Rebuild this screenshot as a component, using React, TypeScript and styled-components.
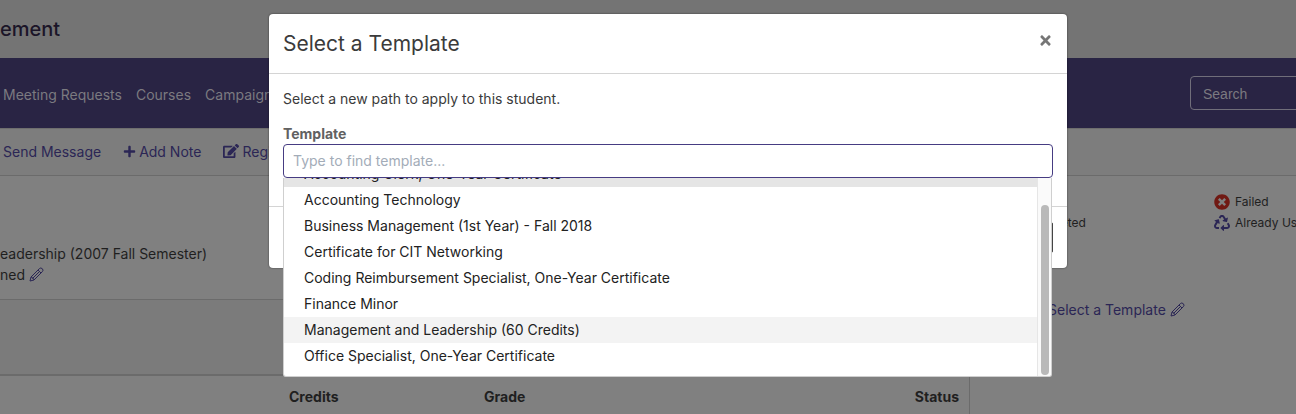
import React from "react";
import styled, { createGlobalStyle, css } from "styled-components";
import { FaPlus, FaEdit, FaTimes, FaTimesCircle, FaRecycle } from "react-icons/fa";

const ink = "#1f1f1f";
const indigo = "#2b2655";

const Global = createGlobalStyle`
  * { box-sizing: border-box; }
  body {
    margin: 0;
    overflow: hidden;
    font: 14px/21px Inter, "Liberation Sans", sans-serif;
    color: ${ink};
    background: #808080;
  }
  h1, h2, p, ul { margin: 0; padding: 0; font-weight: 400; }
  button, input { font: inherit; }
  a { color: inherit; text-decoration: none; }
`;

const Page = styled.div`
  position: relative;
  display: flex;
  flex-direction: column;
  min-height: 100vh;
`;

const Header = styled.header`
  padding: 14px 0;
  background: #747474;
`;

const HeaderTitle = styled.h1`
  && { font-size: 20px; line-height: 30px; font-weight: 500; }
  color: #1b1528;
  white-space: nowrap;
`;

const Nav = styled.nav`
  display: flex;
  align-items: center;
  gap: 14px;
  height: 70px;
  padding-left: 3px;
  background: #292444;
  color: #7b7a80;
  white-space: nowrap;
  overflow: hidden;
`;

const NavLink = styled.a`
  padding-top: 2px;
`;

const NavSearch = styled.input`
  flex: none;
  width: 200px;
  height: 34px;
  margin-left: auto;
  margin-right: -94px;
  padding: 2px 12px 0;
  border: 1px solid #706e7a;
  border-radius: 4px;
  background: transparent;
  color: #7b7a80;
  && { font-family: "Liberation Sans", sans-serif; }
  &::placeholder { color: #7b7a80; opacity: 1; }
`;

const Toolbar = styled.div`
  display: flex;
  align-items: center;
  gap: 22px;
  height: 48px;
  padding-bottom: 2px;
  padding-left: 3px;
  border-top: 1px solid #6e6e6e;
  border-bottom: 1px solid #6b6b6b;
  background: #7d7d7d;
`;

const ToolButton = styled.button`
  display: flex;
  align-items: center;
  gap: 3px;
  padding: 0;
  border: 0;
  background: none;
  color: ${indigo};
  white-space: nowrap;
`;

const Content = styled.div`
  display: flex;
  flex: 1;
`;

const Main = styled.main`
  display: flex;
  flex-direction: column;
  flex: 1;
  border-right: 1px solid #6b6b6b;
`;

const Summary = styled.section`
  padding: 67px 0 14px;
  white-space: nowrap;
`;

const SummaryLine = styled.p`
  display: flex;
  align-items: center;
  gap: 4px;
`;

const Spacer = styled.div`
  height: 77px;
  border-top: 1px solid #6b6b6b;
  border-bottom: 2px solid #6b6b6b;
  background: #7b7b7b;
`;

const Courses = styled.table`
  width: 100%;
  border-collapse: collapse;
  table-layout: fixed;
  border-bottom: 1px solid #6b6b6b;
`;

const Th = styled.th<{ $width?: string; $right?: boolean }>`
  width: ${(p) => p.$width ?? "auto"};
  height: 38px;
  padding: 4px 10px 0 0;
  font-weight: 700;
  text-align: ${(p) => (p.$right ? "right" : "left")};
`;

const Aside = styled.aside`
  flex: none;
  width: 326px;
  overflow: hidden;
`;

const Legend = styled.ul`
  display: grid;
  grid-template-columns: 190px 160px;
  && { padding: 15px 0 0 54px; }
  font-size: 12px;
  list-style: none;
`;

const LegendItem = styled.li`
  display: flex;
  align-items: center;
  gap: 5px;
  height: 21px;
  white-space: nowrap;
`;

const TemplateLink = styled.a`
  && { color: ${indigo}; }
  display: flex;
  align-items: center;
  gap: 4px;
  padding: 66px 0 0 78px;
`;

const Dialog = styled.div`
  position: absolute;
  top: 14px;
  left: 269px;
  right: 229px;
  border-radius: 4px;
  background: #fff;
  box-shadow: 0 0 2px rgba(0, 0, 0, 0.6);
  color: #3b3b3b;
`;

const DialogHead = styled.div`
  display: flex;
  align-items: center;
  justify-content: space-between;
  height: 60px;
  padding: 0 14px;
  border-bottom: 1px solid #d4d4d4;
`;

const DialogTitle = styled.h2`
  && { font-size: 21px; line-height: 30px; }
`;

const CloseButton = styled.button`
  display: flex;
  padding: 0 0 7px;
  border: 0;
  background: none;
  color: #767676;
`;

const DialogBody = styled.div`
  padding: 14px 14px 28px;
`;

const Label = styled.label`
  display: block;
  margin-top: 14px;
  font-weight: 700;
  color: #616161;
`;

const Picker = styled.div`
  position: relative;
`;

const PickerInput = styled.input`
  display: block;
  width: 100%;
  height: 34px;
  padding: 0 9px 2px;
  border: 1px solid #463c82;
  border-radius: 4px;
  outline: none;
  &::placeholder { color: #a3acb8; opacity: 1; }
`;

const Menu = styled.div`
  position: absolute;
  top: 100%;
  left: 0;
  right: 1px;
  display: flex;
  height: 199px;
  border: 1px solid #cfcfcf;
  border-top: 0;
  border-radius: 0 0 3px 3px;
  background: #fff;
  overflow: hidden;
`;

const Options = styled.ul`
  display: flex;
  flex-direction: column;
  justify-content: flex-end;
  flex: 1;
  && { padding-bottom: 7px; }
  list-style: none;
  color: #222;
`;

const Option = styled.li<{ $tone?: "active" | "hover" }>`
  flex: none;
  height: 26px;
  padding: 0 20px;
  line-height: 26px;
  ${(p) => p.$tone === "active" && css`background: #e5e5e5;`}
  ${(p) => p.$tone === "hover" && css`background: #f3f3f3;`}
`;

const Track = styled.div`
  display: flex;
  width: 14px;
  padding: 27px 2px 1px 3px;
  border-left: 1px solid #e6e6e6;
  background: #fafafa;
`;

const Thumb = styled.div`
  flex: 1;
  border-radius: 4px;
  background: #b9b9b9;
`;

const DialogFoot = styled.div`
  display: flex;
  justify-content: flex-end;
  padding: 15px 14px;
  border-top: 1px solid #d4d4d4;
`;

const ApplyButton = styled.button`
  height: 31px;
  padding: 0 12px;
  border: 1px solid #444;
  border-radius: 2px;
  background: #444;
  color: #fff;
`;

const Pencil = () => (
  <svg width="15" height="15" viewBox="0 0 15 15" fill="none" stroke={indigo} strokeWidth="1" strokeLinejoin="round" aria-hidden="true">
    <path d="M1 14 L2 10 L10.3 1.7 Q11.8 .2 13.3 1.7 Q14.8 3.2 13.3 4.7 L5 13 Z" />
    <path d="M2 10 Q3.6 9.9 3.6 11.4 Q5.1 11.4 5 13 M9 3 L12 6 M3.6 11.4 L10.5 4.5" />
  </svg>
);

const options: { name: string; tone?: "active" | "hover" }[] = [
  { name: "Accounting Clerk, One-Year Certificate", tone: "active" },
  { name: "Accounting Technology" },
  { name: "Business Management (1st Year) - Fall 2018" },
  { name: "Certificate for CIT Networking" },
  { name: "Coding Reimbursement Specialist, One-Year Certificate" },
  { name: "Finance Minor" },
  { name: "Management and Leadership (60 Credits)", tone: "hover" },
  { name: "Office Specialist, One-Year Certificate" },
];

export default function App() {
  return (
    <Page>
      <Global />
      <Header>
        <HeaderTitle>ement</HeaderTitle>
      </Header>
      <Nav>
        <NavLink href="#meetings">Meeting Requests</NavLink>
        <NavLink href="#courses">Courses</NavLink>
        <NavLink href="#campaigns">Campaigns</NavLink>
        <NavSearch aria-label="Search" placeholder="Search" />
      </Nav>
      <Toolbar>
        <ToolButton>Send Message</ToolButton>
        <ToolButton><FaPlus size={13} />Add Note</ToolButton>
        <ToolButton><FaEdit size={16} />Register</ToolButton>
      </Toolbar>
      <Content>
        <Main>
          <Summary>
            <SummaryLine>eadership (2007 Fall Semester)</SummaryLine>
            <SummaryLine>ned <Pencil /></SummaryLine>
          </Summary>
          <Spacer />
          <Courses>
            <thead>
              <tr>
                <Th $width="289px" aria-label="Course" />
                <Th $width="195px">Credits</Th>
                <Th>Grade</Th>
                <Th $right>Status</Th>
              </tr>
            </thead>
          </Courses>
        </Main>
        <Aside>
          <Legend>
            <LegendItem />
            <LegendItem><FaTimesCircle size={16} color="#701913" />Failed</LegendItem>
            <LegendItem>Completed</LegendItem>
            <LegendItem><FaRecycle size={16} color={indigo} />Already Used</LegendItem>
          </Legend>
          <TemplateLink href="#template">Select a Template <Pencil /></TemplateLink>
        </Aside>
      </Content>

      <Dialog role="dialog" aria-labelledby="dialog-title">
        <DialogHead>
          <DialogTitle id="dialog-title">Select a Template</DialogTitle>
          <CloseButton aria-label="Close"><FaTimes size={15} /></CloseButton>
        </DialogHead>
        <DialogBody>
          <p>Select a new path to apply to this student.</p>
          <Label htmlFor="template">Template</Label>
          <Picker>
            <PickerInput id="template" placeholder="Type to find template..." />
            <Menu>
              <Options role="listbox" aria-label="Templates">
                {options.map((o) => (
                  <Option key={o.name} role="option" aria-selected={o.tone === "active"} $tone={o.tone}>{o.name}</Option>
                ))}
              </Options>
              <Track><Thumb /></Track>
            </Menu>
          </Picker>
        </DialogBody>
        <DialogFoot>
          <ApplyButton>Apply</ApplyButton>
        </DialogFoot>
      </Dialog>
    </Page>
  );
}
